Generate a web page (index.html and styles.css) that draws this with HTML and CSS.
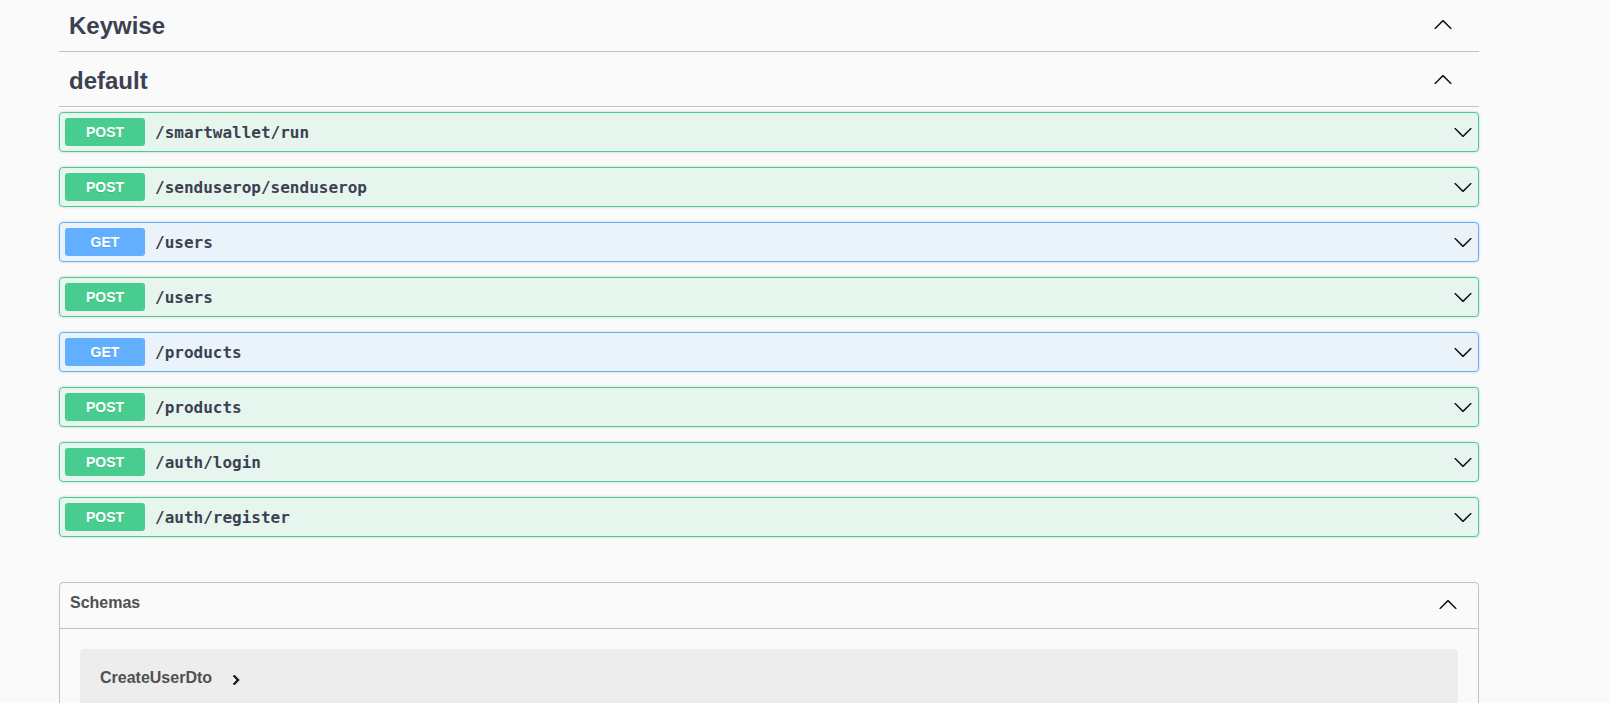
FILE: index.html
```html
<!DOCTYPE html>
<html lang="en">
<head>
<meta charset="utf-8">
<title>Swagger UI</title>
<link rel="stylesheet" href="styles.css">
</head>
<body>
<div class="wrapper">
  <section class="tag-section">
    <h3 class="opblock-tag"><span class="tag-name">Keywise</span>
      <svg class="arrow tag-arrow" width="20" height="20" viewBox="0 0 20 20"><path d="M17.418 14.908c.272.268.709.268.979 0s.271-.701 0-.969l-7.908-7.83c-.27-.268-.707-.268-.979 0l-7.908 7.83c-.27.268-.27.701 0 .969.271.268.709.268.979 0L10 7.75l7.418 7.158z"/></svg>
    </h3>
  </section>
  <section class="tag-section">
    <h3 class="opblock-tag"><span class="tag-name">default</span>
      <svg class="arrow tag-arrow" width="20" height="20" viewBox="0 0 20 20"><path d="M17.418 14.908c.272.268.709.268.979 0s.271-.701 0-.969l-7.908-7.83c-.27-.268-.707-.268-.979 0l-7.908 7.83c-.27.268-.27.701 0 .969.271.268.709.268.979 0L10 7.75l7.418 7.158z"/></svg>
    </h3>
    <div class="opblock post"><div class="summary"><span class="method">POST</span><span class="path">/smartwallet/run</span><svg class="arrow" width="20" height="20" viewBox="0 0 20 20"><path d="M17.418 6.109c.272-.268.709-.268.979 0s.271.701 0 .969l-7.908 7.83c-.27.268-.707.268-.979 0l-7.908-7.830c-.27-.268-.27-.701 0-.969.271-.268.709-.268.979 0L10 13.25l7.418-7.141z"/></svg></div></div>
    <div class="opblock post"><div class="summary"><span class="method">POST</span><span class="path">/senduserop/senduserop</span><svg class="arrow" width="20" height="20" viewBox="0 0 20 20"><path d="M17.418 6.109c.272-.268.709-.268.979 0s.271.701 0 .969l-7.908 7.83c-.27.268-.707.268-.979 0l-7.908-7.83c-.27-.268-.27-.701 0-.969.271-.268.709-.268.979 0L10 13.25l7.418-7.141z"/></svg></div></div>
    <div class="opblock get"><div class="summary"><span class="method">GET</span><span class="path">/users</span><svg class="arrow" width="20" height="20" viewBox="0 0 20 20"><path d="M17.418 6.109c.272-.268.709-.268.979 0s.271.701 0 .969l-7.908 7.83c-.27.268-.707.268-.979 0l-7.908-7.83c-.27-.268-.27-.701 0-.969.271-.268.709-.268.979 0L10 13.25l7.418-7.141z"/></svg></div></div>
    <div class="opblock post"><div class="summary"><span class="method">POST</span><span class="path">/users</span><svg class="arrow" width="20" height="20" viewBox="0 0 20 20"><path d="M17.418 6.109c.272-.268.709-.268.979 0s.271.701 0 .969l-7.908 7.83c-.27.268-.707.268-.979 0l-7.908-7.83c-.27-.268-.27-.701 0-.969.271-.268.709-.268.979 0L10 13.25l7.418-7.141z"/></svg></div></div>
    <div class="opblock get"><div class="summary"><span class="method">GET</span><span class="path">/products</span><svg class="arrow" width="20" height="20" viewBox="0 0 20 20"><path d="M17.418 6.109c.272-.268.709-.268.979 0s.271.701 0 .969l-7.908 7.83c-.27.268-.707.268-.979 0l-7.908-7.83c-.27-.268-.27-.701 0-.969.271-.268.709-.268.979 0L10 13.25l7.418-7.141z"/></svg></div></div>
    <div class="opblock post"><div class="summary"><span class="method">POST</span><span class="path">/products</span><svg class="arrow" width="20" height="20" viewBox="0 0 20 20"><path d="M17.418 6.109c.272-.268.709-.268.979 0s.271.701 0 .969l-7.908 7.83c-.27.268-.707.268-.979 0l-7.908-7.83c-.27-.268-.27-.701 0-.969.271-.268.709-.268.979 0L10 13.25l7.418-7.141z"/></svg></div></div>
    <div class="opblock post"><div class="summary"><span class="method">POST</span><span class="path">/auth/login</span><svg class="arrow" width="20" height="20" viewBox="0 0 20 20"><path d="M17.418 6.109c.272-.268.709-.268.979 0s.271.701 0 .969l-7.908 7.83c-.27.268-.707.268-.979 0l-7.908-7.83c-.27-.268-.27-.701 0-.969.271-.268.709-.268.979 0L10 13.25l7.418-7.141z"/></svg></div></div>
    <div class="opblock post"><div class="summary"><span class="method">POST</span><span class="path">/auth/register</span><svg class="arrow" width="20" height="20" viewBox="0 0 20 20"><path d="M17.418 6.109c.272-.268.709-.268.979 0s.271.701 0 .969l-7.908 7.83c-.27.268-.707.268-.979 0l-7.908-7.83c-.27-.268-.27-.701 0-.969.271-.268.709-.268.979 0L10 13.25l7.418-7.141z"/></svg></div></div>
  </section>
  <section class="models">
    <h4 class="models-head"><span class="models-title">Schemas</span>
      <svg class="arrow models-arrow" width="20" height="20" viewBox="0 0 20 20"><path d="M17.418 14.908c.272.268.709.268.979 0s.271-.701 0-.969l-7.908-7.83c-.27-.268-.707-.268-.979 0l-7.908 7.83c-.27.268-.27.701 0 .969.271.268.709.268.979 0L10 7.75l7.418 7.158z"/></svg>
    </h4>
    <div class="model-list">
      <div class="model-container">
        <div class="model-box"><span class="model-title">CreateUserDto</span>
          <svg class="model-toggle" width="20" height="20" viewBox="0 0 24 24"><path d="M10 6L8.59 7.41 13.170 12l-4.58 4.59L10 18l6-6z"/></svg>
        </div>
      </div>
    </div>
  </section>
</div>
</body>
</html>
```
FILE: styles.css
```css
html, body {
  margin: 0;
  padding: 0;
  background: #fafafa;
}
body {
  font-family: "Liberation Sans", Arial, sans-serif;
  color: #3b4151;
}
.wrapper {
  width: 1420px;
  margin-left: 59px;
  padding-top: 2px;
}
.tag-section {
  display: flex;
  flex-direction: column;
}
.opblock-tag {
  box-sizing: border-box;
  height: 50px;
  margin: 0 0 5px;
  padding: 0 20px 1px 10px;
  display: flex;
  align-items: center;
  border-bottom: 1px solid rgba(59, 65, 81, 0.3);
  font-size: 24px;
  font-weight: 700;
  color: #3b4151;
}
.tag-name {
  flex: 1;
}
.arrow {
  fill: #111;
  flex: none;
}
.tag-arrow {
  margin-right: 6px;
  margin-bottom: 4px;
}
.opblock {
  margin: 0 0 15px;
  border: 1px solid;
  border-radius: 4px;
  box-shadow: 0 0 3px rgba(0, 0, 0, 0.19);
}
.opblock.post {
  border-color: #49cc90;
  background: rgba(73, 204, 144, 0.1);
}
.opblock.get {
  border-color: #61affe;
  background: rgba(97, 175, 254, 0.1);
}
.summary {
  display: flex;
  align-items: center;
  padding: 5px;
}
.method {
  width: 80px;
  height: 28px;
  line-height: 28px;
  text-align: center;
  border-radius: 3px;
  color: #fff;
  font-size: 14px;
  font-weight: 700;
  text-shadow: 0 1px 0 rgba(0, 0, 0, 0.1);
}
.post .method {
  background: #49cc90;
}
.get .method {
  background: #61affe;
}
.path {
  flex: 1;
  padding: 0 10px;
  font-family: "DejaVu Sans Mono", monospace;
  font-size: 16px;
  font-weight: 700;
  color: #3b4151;
}
.models {
  margin: 30px 0;
  border: 1px solid rgba(59, 65, 81, 0.3);
  border-radius: 4px;
}
.models-head {
  box-sizing: border-box;
  height: 46px;
  margin: 0;
  padding: 0 20px 6px 10px;
  display: flex;
  align-items: center;
  border-bottom: 1px solid rgba(59, 65, 81, 0.3);
  font-size: 16px;
  font-weight: 700;
  color: #505050;
}
.models-title {
  flex: 1;
}
.models-arrow {
  margin-top: 2px;
}
.model-list {
  padding: 20px 20px 20px;
}
.model-container {
  background: rgba(0, 0, 0, 0.05);
  border-radius: 4px;
}
.model-box {
  display: flex;
  align-items: center;
  padding: 17px 20px 30px;
}
.model-title {
  font-size: 16px;
  font-weight: 700;
  line-height: 18px;
  color: #505050;
}
.model-toggle {
  margin-left: 14px;
  margin-top: 4px;
  fill: #111;
  stroke: #111;
  stroke-width: 0.8;
}
```
